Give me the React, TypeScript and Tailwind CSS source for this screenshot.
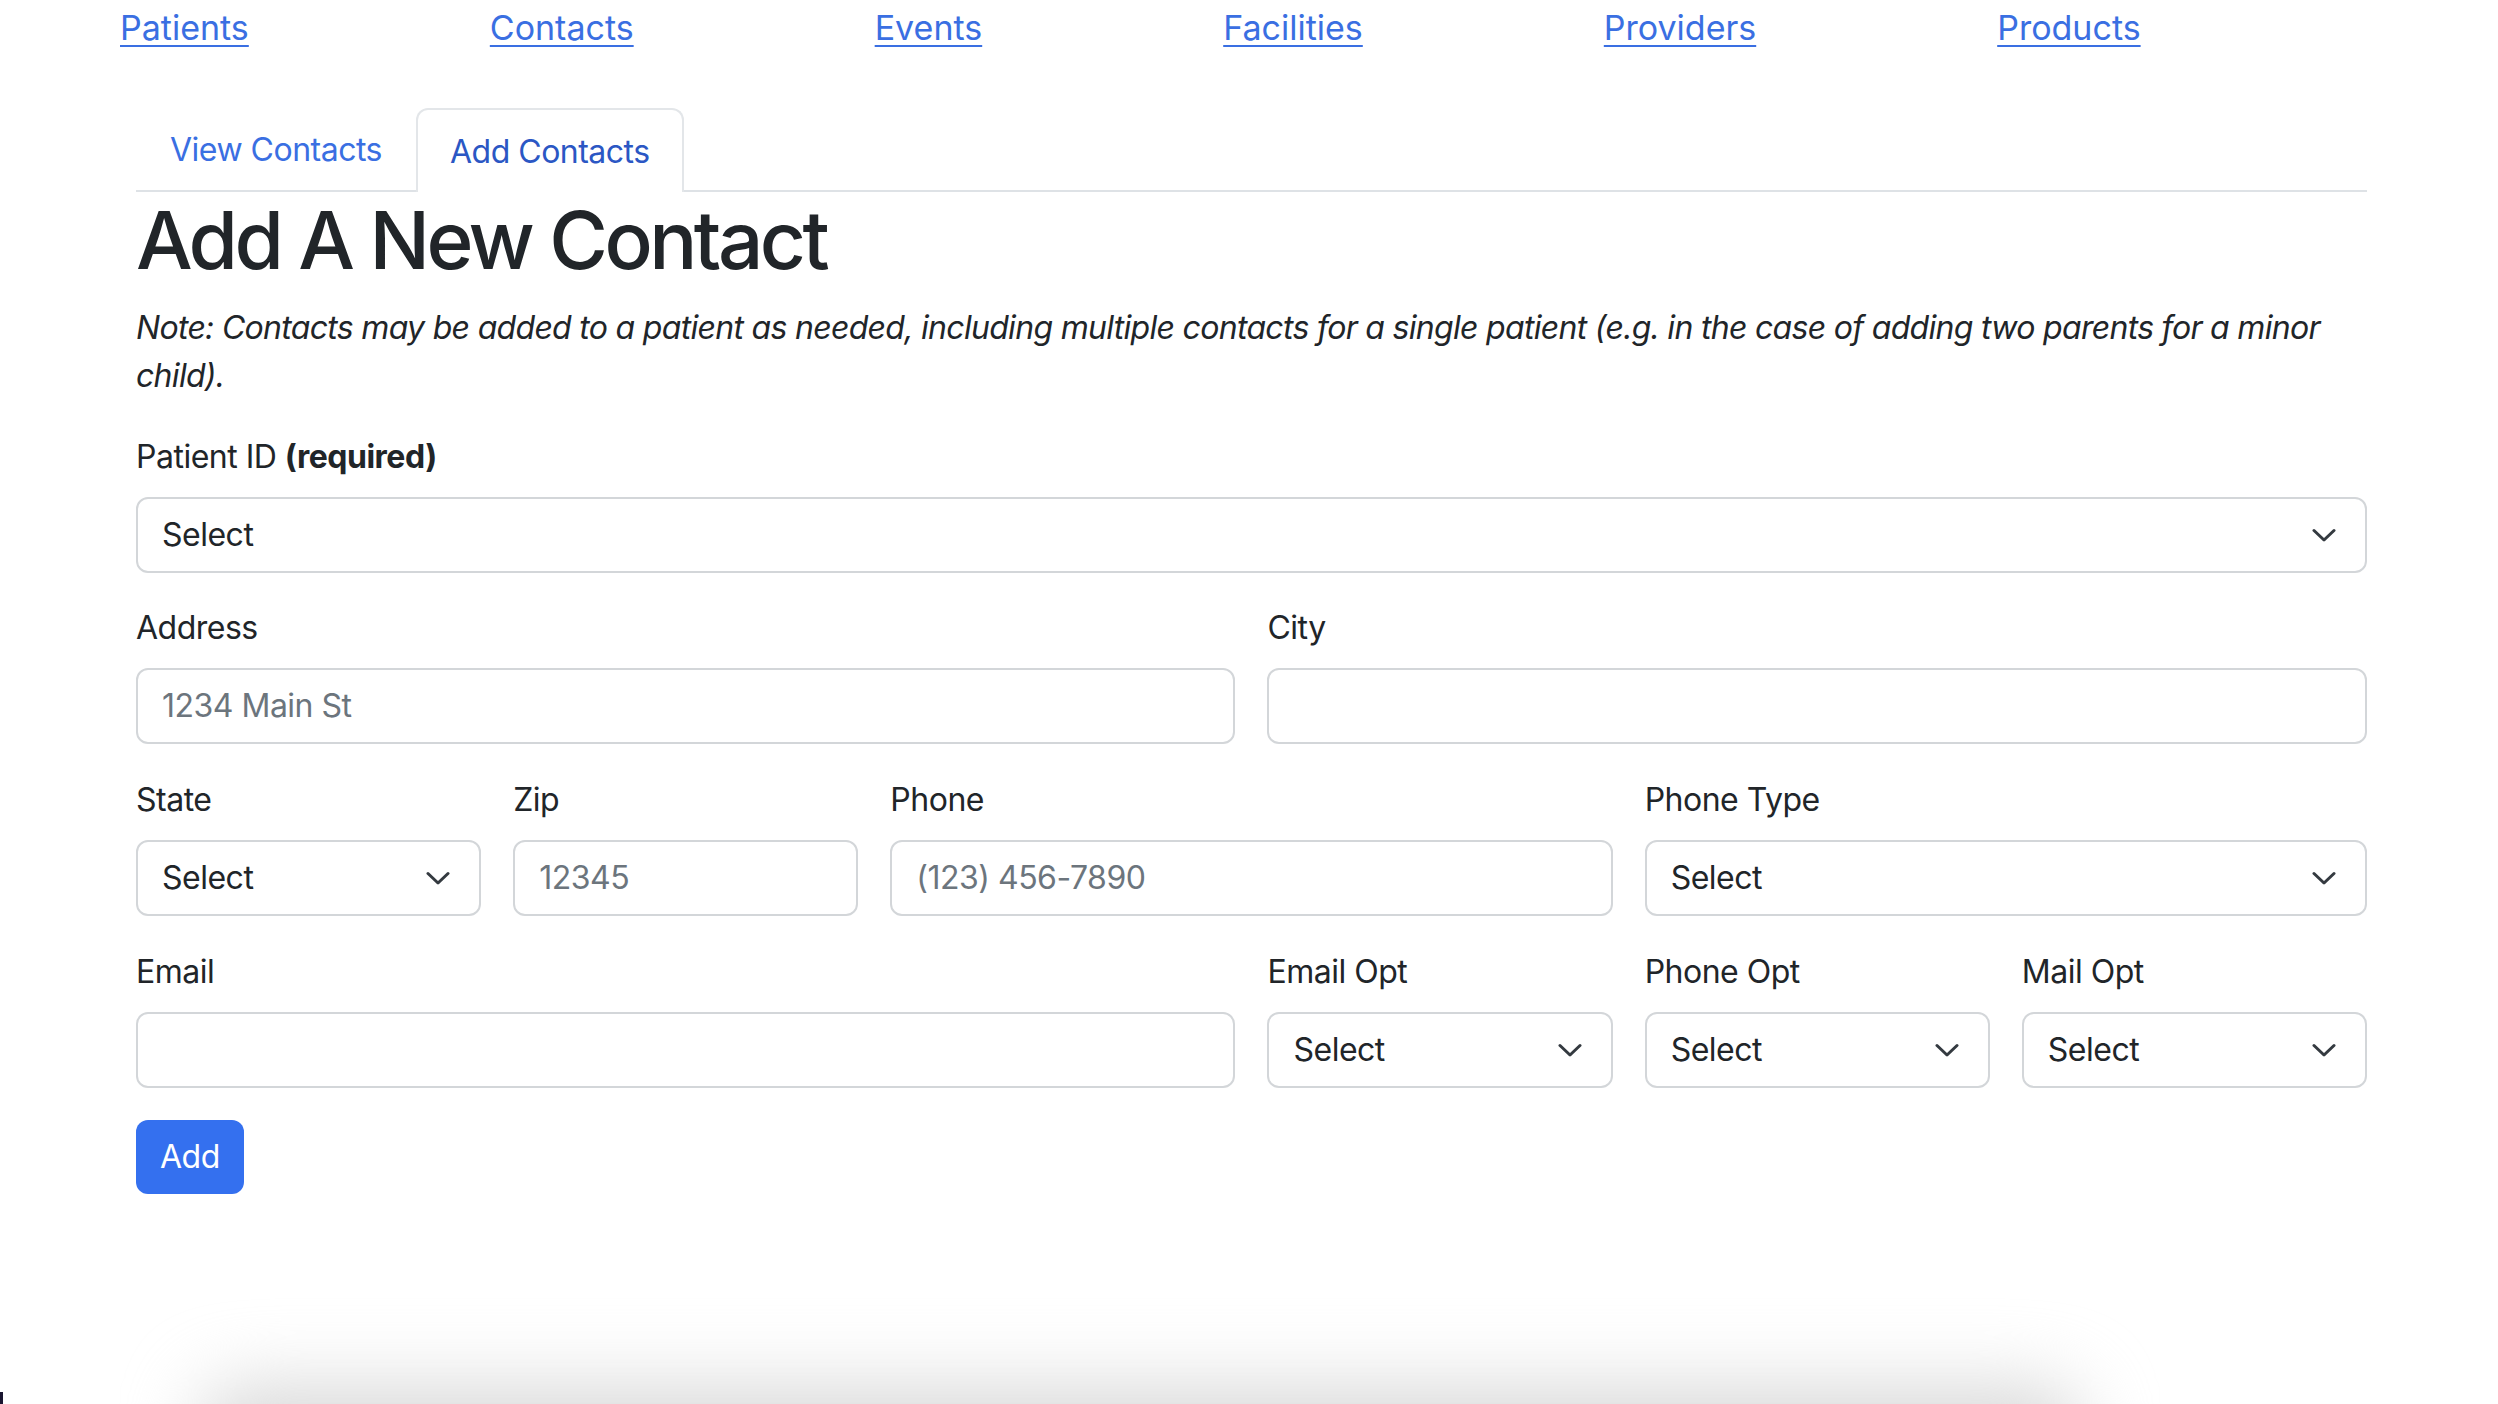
import React from "react";

const font = { fontFamily: "Inter, 'Noto Sans', sans-serif" };

function Chevron() {
  return (
    <svg width="24" height="16" viewBox="0 0 24 16" className="shrink-0">
      <path d="M2 3.5 L12 13 L22 3.5" fill="none" stroke="#343a40" strokeWidth="3" strokeLinecap="round" strokeLinejoin="round" />
    </svg>
  );
}

function Label({ children }: { children: React.ReactNode }) {
  return <div className="h-[48px] leading-[48px] text-[32px] tracking-[-0.5px] text-[#212529] mb-[16px]">{children}</div>;
}

function SelectBox() {
  return (
    <div className="h-[76px] border-2 border-[#d3d6d9] rounded-[12px] bg-white flex items-center justify-between pl-[24px] pr-[29px] text-[32px] tracking-[-0.5px] text-[#212529]">
      <span>Select</span>
      <Chevron />
    </div>
  );
}

function InputBox({ placeholder }: { placeholder?: string }) {
  return (
    <div className="h-[76px] border-2 border-[#d3d6d9] rounded-[12px] bg-white flex items-center px-[24px] text-[32px] tracking-[-0.5px] text-[#6c757d]">
      {placeholder ?? ""}
    </div>
  );
}

function Field({ label, children, className }: { label: React.ReactNode; children: React.ReactNode; className: string }) {
  return (
    <div className={className}>
      <Label>{label}</Label>
      {children}
    </div>
  );
}

export default function App() {
  const links = ["Patients", "Contacts", "Events", "Facilities", "Providers", "Products"];
  return (
    <div className="relative w-[2498px] h-[1404px] overflow-hidden bg-white" style={font}>
      <div className="flex pl-[120px] gap-[241px] h-[56px] items-center">
        {links.map((l) => (
          <a key={l} href="#" className="text-[34px] leading-[48px] text-[#3a6fe2] underline decoration-2 underline-offset-[5px]">
            {l}
          </a>
        ))}
      </div>
      <div className="ml-[136px] w-[2231px]">
        <div className="mt-[52px] flex border-b-2 border-[#dee2e6] h-[84px]">
          <div className="px-[34px] pt-[18px] text-[32px] leading-[48px] tracking-[-0.5px] text-[#3a6fe2]">View Contacts</div>
          <div className="px-[32px] pt-[18px] text-[32px] leading-[48px] tracking-[-0.5px] text-[#2b57c4] border-2 border-b-0 border-[#e3e6e9] rounded-t-[12px] bg-white -mb-[2px] h-[84px]">
            Add Contacts
          </div>
        </div>
        <h1 className="text-[80px] leading-[96px] font-medium text-[#212529] tracking-[-3.5px]">Add A New Contact</h1>
        <p className="mt-[16px] text-[32px] leading-[48px] italic tracking-[-0.7px] text-[#212529]">
          Note: Contacts may be added to a patient as needed, including multiple contacts for a single patient (e.g. in the case of adding two parents for a minor child).
        </p>
        <div className="mt-[33px]">
          <Label>
            Patient ID <b className="font-bold">(required)</b>
          </Label>
          <SelectBox />
        </div>
        <div className="mt-[31px] grid grid-cols-12 gap-x-[32px] gap-y-[32px]">
          <Field label="Address" className="col-span-6">
            <InputBox placeholder="1234 Main St" />
          </Field>
          <Field label="City" className="col-span-6">
            <InputBox />
          </Field>
          <Field label="State" className="col-span-2">
            <SelectBox />
          </Field>
          <Field label="Zip" className="col-span-2">
            <InputBox placeholder="12345" />
          </Field>
          <Field label="Phone" className="col-span-4">
            <InputBox placeholder="(123) 456-7890" />
          </Field>
          <Field label="Phone Type" className="col-span-4">
            <SelectBox />
          </Field>
          <Field label="Email" className="col-span-6">
            <InputBox />
          </Field>
          <Field label="Email Opt" className="col-span-2">
            <SelectBox />
          </Field>
          <Field label="Phone Opt" className="col-span-2">
            <SelectBox />
          </Field>
          <Field label="Mail Opt" className="col-span-2">
            <SelectBox />
          </Field>
        </div>
        <button className="mt-[32px] h-[74px] px-[24px] rounded-[12px] bg-[#3470ef] text-white text-[32px] leading-[48px] tracking-[-0.5px]">
          Add
        </button>
      </div>
      <div className="absolute top-[1385px] left-[200px] w-[1880px] h-[140px] bg-[#d9d9d9] blur-[36px] rounded-[40px]" />
      <div className="absolute bottom-0 left-0 w-[3px] h-[12px] bg-[#1a1530]" />
    </div>
  );
}
